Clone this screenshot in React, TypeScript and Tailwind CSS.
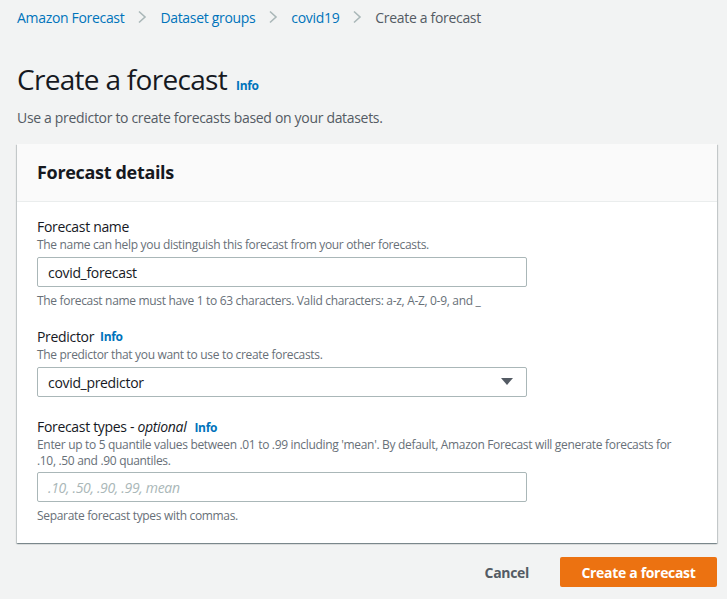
import React from "react";

const Chevron = () => (
  <svg width="10" height="14" viewBox="0 0 10 14" className="mx-[13px]">
    <path d="M2 1.5 L8 7 L2 12.5" fill="none" stroke="#aab7b8" strokeWidth="1.6" />
  </svg>
);

const Info = () => (
  <span className="text-[12px] font-bold text-[#0073bb] ml-[6px]">Info</span>
);

export default function App() {
  return (
    <div
      className="min-h-[599px] bg-[#f2f3f3] text-[#16191f] pl-[17px] pr-[10px] tracking-[-0.02em]"
      style={{ fontFamily: '"Open Sans", "Noto Sans", Arial, sans-serif' }}
    >
      <nav className="flex items-center h-[34px] text-[14px]">
        <span className="text-[#0073bb]">Amazon Forecast</span>
        <Chevron />
        <span className="text-[#0073bb]">Dataset groups</span>
        <Chevron />
        <span className="text-[#0073bb]">covid19</span>
        <Chevron />
        <span className="text-[#545b64]">Create a forecast</span>
      </nav>
      <div className="mt-[27px] flex items-baseline">
        <h1 className="text-[28px] leading-[36px] font-normal tracking-[-0.025em]">Create a forecast</h1>
        <span className="text-[12px] font-bold text-[#0073bb] ml-[9px]">Info</span>
      </div>
      <p className="mt-[10px] text-[14px] text-[#545b64]">Use a predictor to create forecasts based on your datasets.</p>
      <div className="mt-[16px] bg-white shadow-[0_1px_1px_0_rgba(0,28,36,0.3),1px_1px_1px_0_rgba(0,28,36,0.15),-1px_1px_1px_0_rgba(0,28,36,0.15)]">
        <div className="h-[58px] bg-[#fafafa] border-b border-[#eaeded] flex items-center px-[20px]">
          <h2 className="text-[18px] font-bold">Forecast details</h2>
        </div>
        <div className="px-[20px] pt-[15px] pb-[19px]">
          <div>
            <div className="text-[14px] leading-[20px] h-[20px] flex items-center">Forecast name</div>
            <div className="text-[12px] leading-[16px] text-[#687078]">The name can help you distinguish this forecast from your other forecasts.</div>
            <div className="mt-[4px] w-[490px] h-[30px] border border-[#aab7b8] rounded-[2px] flex items-center px-[10px] text-[14px]">covid_forecast</div>
            <div className="mt-[6px] text-[12px] leading-[16px] text-[#687078]">The forecast name must have 1 to 63 characters. Valid characters: a-z, A-Z, 0-9, and _</div>
          </div>
          <div className="mt-[18px]">
            <div className="text-[14px] leading-[20px] h-[20px] flex items-center">Predictor<Info /></div>
            <div className="text-[12px] leading-[16px] text-[#687078]">The predictor that you want to use to create forecasts.</div>
            <div className="mt-[4px] w-[490px] h-[30px] border border-[#aab7b8] rounded-[2px] flex items-center justify-between pl-[10px] pr-[13px] text-[14px]">
              <span>covid_predictor</span>
              <svg width="12" height="8" viewBox="0 0 12 8"><path d="M0 0 H12 L6 7 Z" fill="#545b64" /></svg>
            </div>
          </div>
          <div className="mt-[20px]">
            <div className="text-[14px] leading-[20px] h-[20px] flex items-center">Forecast types -&nbsp;<i>optional</i><span className="ml-[2px]"><Info /></span></div>
            <div className="text-[12px] leading-[16px] text-[#687078]">Enter up to 5 quantile values between .01 to .99 including 'mean'. By default, Amazon Forecast will generate forecasts for<br />.10, .50 and .90 quantiles.</div>
            <div className="mt-[3px] w-[490px] h-[30px] border border-[#aab7b8] rounded-[2px] flex items-center px-[10px] text-[14px] italic text-[#aab7b8]">.10, .50, .90, .99, mean</div>
            <div className="mt-[6px] text-[12px] leading-[16px] text-[#687078]">Separate forecast types with commas.</div>
          </div>
        </div>
      </div>
      <div className="mt-[14px] flex justify-end items-center">
        <span className="text-[14px] font-bold text-[#545b64] mr-[31px]">Cancel</span>
        <div className="h-[30px] w-[157px] bg-[#ec7211] rounded-[2px] flex items-center justify-center text-white text-[14px] font-bold">Create a forecast</div>
      </div>
    </div>
  );
}
